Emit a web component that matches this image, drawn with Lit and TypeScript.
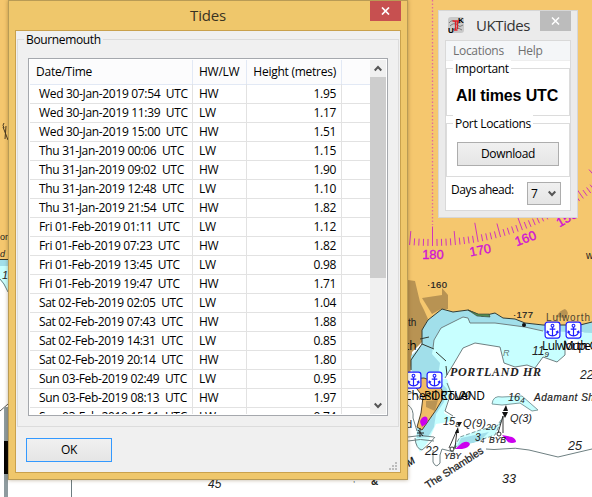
import { LitElement, html, svg, css } from "lit";
import { customElement } from "lit/decorators.js";

const TIDES: [string, string, string][] = [
  ["Wed 30-Jan-2019 07:54", "HW", "1.95"],
  ["Wed 30-Jan-2019 11:39", "LW", "1.17"],
  ["Wed 30-Jan-2019 15:00", "HW", "1.51"],
  ["Thu 31-Jan-2019 00:06", "LW", "1.15"],
  ["Thu 31-Jan-2019 09:02", "HW", "1.90"],
  ["Thu 31-Jan-2019 12:48", "LW", "1.10"],
  ["Thu 31-Jan-2019 21:54", "HW", "1.82"],
  ["Fri 01-Feb-2019 01:11", "LW", "1.12"],
  ["Fri 01-Feb-2019 07:23", "HW", "1.82"],
  ["Fri 01-Feb-2019 13:45", "LW", "0.98"],
  ["Fri 01-Feb-2019 19:47", "HW", "1.71"],
  ["Sat 02-Feb-2019 02:05", "LW", "1.04"],
  ["Sat 02-Feb-2019 07:43", "HW", "1.88"],
  ["Sat 02-Feb-2019 14:31", "LW", "0.85"],
  ["Sat 02-Feb-2019 20:14", "HW", "1.80"],
  ["Sun 03-Feb-2019 02:49", "LW", "0.95"],
  ["Sun 03-Feb-2019 08:13", "HW", "1.97"],
  ["Sun 03-Feb-2019 15:11", "LW", "0.74"],
];

@customElement("nautical-chart")
class NauticalChart extends LitElement {
  static styles = css`
    :host { display: block; width: 592px; height: 497px; }
    svg { display: block; }
    text { font-family: "Liberation Sans", sans-serif; fill: #222; }
    .rose { fill: #d012d4; stroke: #d012d4; stroke-width: 0.35; font-size: 13px; text-anchor: middle; }
    .deg { stroke: #cf35bb; stroke-width: 1; }
    .serif { font-family: "Liberation Serif", serif; font-style: italic; font-weight: bold; }
    .it { font-style: italic; }
    .open { font-family: "Open Sans", sans-serif; fill: #000; font-size: 12px; }
    .line { fill: none; stroke: #6f8082; stroke-width: 1; }
    .shoal { fill: #c8ffff; stroke: #7d9c9e; stroke-width: 1; }
    .coast { stroke: #303a32; stroke-width: 1; }
    .buoy { fill: none; stroke: #222; stroke-width: 0.9; }
    .flare { fill: #cc00ee; }
  `;

  private ticks() {
    const out = [];
    for (let d = -5; d <= 40; d++) {
      const a = (d * Math.PI) / 180;
      const len = d % 10 === 0 ? 19.5 : d % 5 === 0 ? 14 : 7;
      const p = (r: number) => [432.5 + r * Math.sin(a), -17 + r * Math.cos(a)];
      const [x1, y1] = p(263 - len);
      const [x2, y2] = p(263);
      out.push(svg`<line class="deg" x1=${x1} y1=${y1} x2=${x2} y2=${y2} />`);
    }
    return out;
  }

  private anchor(x: number, y: number) {
    return svg`<g transform="translate(${x} ${y})">
      <rect x="0.6" y="0.6" width="14.8" height="16" rx="2.5" fill="#fff" stroke="#1c1cff" stroke-width="1.2" />
      <circle cx="8" cy="4.2" r="1.4" fill="none" stroke="#1c1cff" stroke-width="1.1" />
      <path d="M8 5.6V14M5.2 7.6H10.8M2.8 9.8Q3.2 14 8 14.4Q12.8 14 13.2 9.8M2.3 11.6L2.8 9.6L4.6 10.8M13.7 11.6L13.2 9.6L11.4 10.8" fill="none" stroke="#1c1cff" stroke-width="1.2" />
    </g>`;
  }

  render() {
    return html`<svg width="592" height="497" viewBox="0 0 592 497">
      <rect width="592" height="497" fill="#fff" />
      <path fill="#f5c76e" d="M0 0H592V323L587 325H543L525 323L515 319L503 318L495 313L482 316L468 310L453 312L442 309L428 320L422 330V342H8V259H0Z" />
      <path fill="#a1dfea" d="M0 260H8V268H0Z" />
      <path fill="#c8ffff" d="M0 266H8V292L3 284L0 280Z" />
      <path class="line" d="M0 279L4 284L8 292" />
      <path class="coast" fill="none" d="M0 259.500H8" />

      <path fill="#b89353" d="M408 280L415 281L420 302L424 310L428 319L422 331V342L412 352L410 378H408Z" />
      <path fill="#b89353" d="M422 298L442 295V288L448 295V309L441 309L432 314Z" />
      <path fill="#b89353" d="M556 317Q560 310 565 309Q570 312 566 318Z" />

      <path fill="#a1dfea" d="M422 330L428 320L442 309L453 312L468 310L482 316L495 313L503 318L515 319L525 323L543 325H580L592 322V336L582 332L565 332L540 336L465 322L440 350L447 372L436 379H420L411 370V356L422 345Z" />
      <path fill="#c8ffff" d="M433 348L434 340L441 328L463 317L468 318L470 323L495 323L525 327L545 331L592 333V345L571 338L565 343V355L557 362L543 357L535 368L527 365L515 367L504 363L500 347L475 343L463 348L453 365L445 378L438 376L440 363L432 354Z" />
      <path class="line" d="M433 348L434 340L441 328L463 317L468 318L470 323L495 323L525 327L543 331M445 378L453 365L463 348L475 343L500 347L504 363L515 367L527 365L535 368L543 357L557 362L565 355V340" />
      <path class="coast" fill="none" d="M411 370V360L422 344V330L428 320L442 309L453 312L468 310L482 316L495 313L503 318L515 319L525 323L543 325H580L592 322M420 339L429 337M422 344L434 349M436 352L446 361M446 366L447 375" />
      <path fill="#548d52" stroke="#303a32" stroke-width="0.600" d="M468 310L478 314L489 314L490 317L477 316Z" />
      <circle cx="524" cy="325" r="2" fill="#111" />

      <path fill="#c8ffff" d="M437 378L447 379L451 390L444 413L453 418L448 422L436 424L428 442L420 452L415 442L417 430L427 411Z" />
      <path fill="#a1dfea" d="M438 379L447 389L444 402L436 414L434 427L428 437L417 438V428L431 410Z" />
      <path fill="#f0bc66" stroke="#4f422b" d="M408 379L424 378L437 383L442 390V400L436 410L422 430L417 427L421 413L423 397L414 385Z" />
      <path fill="#ba9454" d="M426 401L438 400L435 411L426 407Z" />
      <path class="line" d="M408 405Q414 409 413 418L417 431M447 383L451 393L445 411L453 416M415 438Q416 449 422 450Q430 444 435 437M433 450V462Q436 469 440 463Q439 454 442 449L454 452M408 437Q420 434 434 437M408 441Q420 438 434 441M486 449Q494 450 502 449Q515 447 529 450L558 457L592 449M408 394Q416 390 420 400" />
      <path class="shoal" d="M492 404Q493 395 502 397L522 396L538 410L532 411L520 403L502 405Z" />
      <path class="shoal" stroke-dasharray="4 2" d="M454 447L460 437L480 430L497 426L503 417L495 435L477 441Z" />
      <path fill="#a1dfea" d="M457 447L461 438L489 432L480 441Z" />
      <ellipse class="flare" cx="424" cy="421" rx="3.400" ry="4.800" transform="rotate(25 424 421)" />
      <path class="flare" d="M422 427L420 420L425 424Z" />
      <path class="flare" d="M455 449L462 443Q468 440 470 444Q469 448 462 449Z" />
      <path class="flare" d="M502 435L512 437Q516 439 516 442Q512 444 508 442Z" />
      <path class="buoy" d="M449 448L457 430L455 448M456 448H453M498 433L503 416V433" />
      <circle cx="452" cy="449" r="2" class="buoy" /><circle cx="499" cy="434" r="2" class="buoy" />
      <path fill="#111" d="M455 433L458 427L459 433ZM457 422H462L459 427ZM503 411L506 405L508 411ZM502 412H508L505 418Z" />
      <path d="M420 428V437M417 433H424M418 430L423 436" stroke="#222" />

      <path d="M432.500 0V225" stroke="#e36a9b" stroke-width="1.300" stroke-dasharray="1.500 2" />
      ${this.ticks()}
      <text class="rose" x="433" y="259">180</text>
      <text class="rose" transform="translate(481 254.500) rotate(-10)">170</text>
      <text class="rose" transform="translate(527 242.500) rotate(-20)">160</text>
      <text class="rose" transform="translate(569 222) rotate(-30)">150</text>

      <text x="427" y="288" font-size="9.500" textLength="20" stroke="#222" stroke-width="0.200">·160</text>
      <text x="513" y="318" font-size="9.500" textLength="20" stroke="#222" stroke-width="0.200">·177</text>
      <text x="546" y="321" font-size="10" textLength="44" opacity="0.8">Lulworth</text>
      <text x="586" y="259" font-size="10">w</text>
      <text x="408" y="326" font-size="10">th</text>
      <text x="503" y="356" font-size="9" class="it" fill-opacity="0.650">R</text>
      <text x="532" y="355" font-size="12" class="it">11<tspan font-size="8" dy="2">9</tspan></text>
      <text x="580" y="379" font-size="12" class="it">22</text>
      <text class="serif" x="450" y="376" font-size="12" textLength="91">PORTLAND HR</text>
      <text class="it" x="534" y="401" font-size="10" textLength="66" stroke="#222" stroke-width="0.200">Adamant Sha</text>
      <text class="it" x="508" y="401" font-size="11">16<tspan font-size="8" dy="2">4</tspan></text>
      <text class="it" x="459" y="399" font-size="11">20</text>
      <text class="it" x="443" y="425" font-size="11">15<tspan font-size="8" dy="2">8</tspan></text>
      <text class="it" x="463" y="427" font-size="11" textLength="23">Q(9)</text>
      <text class="it" x="486" y="430" font-size="9">20</text>
      <text class="it" x="510" y="422" font-size="11" textLength="22">Q(3)</text>
      <text class="it" x="475" y="441" font-size="10">3<tspan font-size="7" dy="2">4</tspan></text>
      <text class="it" x="489" y="443" font-size="8.500" textLength="17" stroke="#222" stroke-width="0.200">BYB</text>
      <text class="it" x="444" y="459" font-size="8.500" textLength="17" stroke="#222" stroke-width="0.200">YBY</text>
      <text class="it" x="425" y="455" font-size="12">22</text>
      <text class="it" x="568" y="450" font-size="12.500">25</text>
      <text class="it" x="502" y="483" font-size="12.500">33</text>
      <text class="it" x="208" y="488" font-size="12">45</text>
      <text x="371" y="485" font-size="10" font-weight="bold">&amp;</text>
      <text x="353" y="482" font-size="8">,</text>
      <text transform="translate(428 489) rotate(-33)" font-size="10.500" textLength="67" stroke="#222" stroke-width="0.250">The Shambles</text>
      <text class="it" transform="translate(409 467) rotate(-35)" font-size="10" font-weight="bold">M</text>
      <text x="406" y="428" font-size="11">d</text>

      ${this.anchor(544.5, 321.5)}${this.anchor(565.5, 321.5)}${this.anchor(405.5, 371.5)}${this.anchor(426.5, 371.5)}
      <text class="open" x="542" y="350" textLength="55">Lulworth C</text>
      <text class="open" x="563" y="350" textLength="36">Mupe B</text>
      <text class="open" x="405" y="350">th</text>
      <text class="open" x="404" y="400" textLength="64">Chesil Cove</text>
      <text class="open" x="424" y="400" textLength="61">PORTLAND</text>

      <text x="0" y="240" font-size="9">or</text>
      <text class="it" x="0" y="257" font-size="9">d</text>
      <text class="it" x="2" y="279" font-size="11">1</text>
      <path d="M4 123Q2 125 4 128M3 127L8 140M6 126L5 139" fill="none" stroke="#4a3a22" />
      <path d="M0 411L8 404" stroke="#555" />
      <rect x="4" y="407" width="4" height="90" fill="#8e9b9f" /><rect x="4" y="441" width="4" height="33" fill="#000" />
      <rect x="71" y="480" width="1" height="17" fill="#6d7c80" />
    </svg>`;
  }
}

@customElement("tides-dialog")
class TidesDialog extends LitElement {
  static styles = css`
    :host { box-sizing: border-box; display: flex; flex-direction: column; width: 400px; height: 480px;
      background: #efc76b; border: 1px solid #b99b55; padding: 0 6px 6px;
      font: 12px "Open Sans", sans-serif; color: #000; box-shadow: 0 0 4px rgba(90, 60, 10, 0.4); }
    .bar { position: relative; height: 29px; flex: none; text-align: center; font-size: 15px; line-height: 29px; letter-spacing: -0.2px; color: #3a3322; }
    .close { position: absolute; right: 0; top: 0; width: 31px; height: 20px; background: #c75050; display: grid; place-items: center; }
    .client { position: relative; box-sizing: border-box; flex: 1; background: #f0f0f0; border: 1px solid #c9a14d; padding: 8px 1px 0; }
    .group { box-sizing: border-box; height: 388px; border: 1px solid #dcdcdc; padding: 18px 10px 0; }
    .legend { position: absolute; left: 8px; top: 0; background: #f0f0f0; padding: 0 2px; line-height: 18px; letter-spacing: -0.35px; }
    .list { box-sizing: border-box; height: 358px; border: 1px solid #a5a8ad; background: #fff; padding: 1px; display: flex; }
    .table { flex: 1; overflow: hidden; }
    .row { display: grid; grid-template-columns: 163px 54px 95px 1fr; height: 19px; line-height: 19px; letter-spacing: -0.33px; }
    .cell { box-sizing: border-box; border-right: 1px solid #e2e2e2; border-bottom: 1px solid #e2e2e2; padding-left: 6px; white-space: pre; }
    .cell.date { padding-left: 9px; }
    .cell.num { text-align: right; padding: 0 5px 0 0; }
    .cell.end { border-right: 0; }
    .head { height: 24px; line-height: 24px; background: #fcfcfd; letter-spacing: -0.25px; }
    .head .cell { border-color: #e2e9f5; }
    .scroll { width: 16px; background: #f0f0f0; display: flex; flex-direction: column; }
    .arrow { height: 17px; display: grid; place-items: center; }
    .thumb { height: 201px; background: #cdcdcd; }
    .space { flex: 1; }
    .ok { box-sizing: border-box; margin: 11px 0 0 9px; width: 86px; height: 24px; border: 1px solid #3399ff; background: linear-gradient(#f0f0f0, #e5e5e5); text-align: center; line-height: 22px; letter-spacing: -0.4px; }
    .grip { position: absolute; right: 3px; bottom: 2px; }
    svg { display: block; }
  `;
  render() {
    return html`
      <div class="bar">Tides
        <div class="close"><svg width="9" height="8" viewBox="0 0 9 8"><path d="M1 .5L8 7.500M8 .5L1 7.500" stroke="#fff" stroke-width="1.700" /></svg></div>
      </div>
      <div class="client">
        <div class="group"><div class="list">
          <div class="table">
            <div class="row head"><div class="cell">Date/Time</div><div class="cell">HW/LW</div><div class="cell num">Height (metres)</div><div class="cell end"></div></div>
            ${TIDES.map(([d, t, h]) => html`<div class="row"><div class="cell date">${d}  UTC</div><div class="cell">${t}</div><div class="cell num">${h}</div><div class="cell end"></div></div>`)}
          </div>
          <div class="scroll">
            <div class="arrow"><svg width="8" height="7" viewBox="0 0 8 7"><path d="M.7 5.500L4 2L7.300 5.500" fill="none" stroke="#555" stroke-width="2" /></svg></div>
            <div class="thumb"></div><div class="space"></div>
            <div class="arrow"><svg width="8" height="7" viewBox="0 0 8 7"><path d="M.7 1.500L4 5L7.300 1.500" fill="none" stroke="#555" stroke-width="2" /></svg></div>
          </div>
        </div></div>
        <div class="legend">Bournemouth</div>
        <div class="ok">OK</div>
        <svg class="grip" width="8" height="8"><path d="M6 0h2v2h-2zM3 3h2v2h-2zM6 3h2v2h-2zM0 6h2v2h-2zM3 6h2v2h-2zM6 6h2v2h-2z" fill="#bdbdbd" /></svg>
      </div>`;
  }
}

@customElement("uk-tides-panel")
class UkTidesPanel extends LitElement {
  static styles = css`
    :host { box-sizing: border-box; display: flex; flex-direction: column; width: 140px; height: 208px; background: #ebebeb;
      border: 1px solid #d6d6d6; padding: 0 6px 6px; font: 12px "Open Sans", sans-serif; color: #000; }
    .bar { height: 29px; display: flex; align-items: flex-start; flex: none; }
    .logo { margin: 6px 0 0 3px; flex: none; }
    .title { margin: 0 0 0 12px; flex: 1; font-size: 15px; line-height: 29px; color: #333; letter-spacing: -0.4px; }
    .close { width: 31px; height: 20px; background: #bcbcbc; display: grid; place-items: center; flex: none; }
    .client { box-sizing: border-box; flex: 1; background: #fff; border: 1px solid #d9d9d9; }
    .menu { display: flex; gap: 14px; padding-left: 7px; height: 19px; line-height: 20px; background: #f4f6f8; color: #707070; border-bottom: 1px solid #eee; letter-spacing: -0.3px; }
    .group { position: relative; box-sizing: border-box; border: 1px solid #dcdcdc; }
    .legend { position: absolute; left: 6px; top: -9px; padding: 0 2px; background: #fff; line-height: 18px; letter-spacing: -0.3px; white-space: nowrap; }
    .important { height: 48px; margin-top: 7px; font: bold 16px "Liberation Sans", sans-serif; line-height: 53px; padding-left: 9px; white-space: nowrap; letter-spacing: -0.15px; }
    .important .legend { font: 12px/18px "Open Sans", sans-serif; }
    .ports { height: 54px; margin-top: 7px; padding: 18px 10px 0; }
    .btn { box-sizing: border-box; height: 24px; width: 102px; border: 1px solid #adadad; background: linear-gradient(#f0f0f0, #e5e5e5); text-align: center; line-height: 22px; letter-spacing: -0.35px; }
    .days { display: flex; justify-content: space-between; padding: 5px 9px 0 5px; line-height: 16px; letter-spacing: -0.5px; }
    .select { box-sizing: border-box; width: 34px; height: 23px; border: 1px solid #adadad; background: linear-gradient(#f0f0f0, #e5e5e5); display: flex; align-items: center; justify-content: space-between; padding: 0 4px 0 3px; }
    svg { display: block; }
  `;
  render() {
    return html`
      <div class="bar">
        <svg class="logo" width="16" height="16" viewBox="0 0 16 16">
          <rect width="16" height="16" rx="3" fill="#c9c9c9" />
          <path d="M1 6Q4 2 7 5T14 4M2 9Q6 5 9 8T15 8M5 13Q8 9 14 13" fill="none" stroke="#666" stroke-width=".8" />
          <text x="0" y="15.500" font-family="Liberation Sans" font-size="8" font-weight="bold">U</text>
          <text x="10" y="6" font-family="Liberation Sans" font-size="8" font-weight="bold">K</text>
          <path d="M4.500 4H11M7.500 4V13M6 13H9.500M9.500 4V12" stroke="#dd2028" stroke-width="1.300" fill="none" />
        </svg>
        <div class="title">UKTides</div>
        <div class="close"><svg width="9" height="8" viewBox="0 0 9 8"><path d="M1 .5L8 7.500M8 .5L1 7.500" stroke="#fff" stroke-width="1.500" /></svg></div>
      </div>
      <div class="client">
        <div class="menu"><span>Locations</span><span>Help</span></div>
        <div class="group important"><div class="legend">Important</div>All times UTC</div>
        <div class="group ports"><div class="legend">Port Locations</div><div class="btn">Download</div></div>
        <div class="days"><span>Days ahead:</span>
          <div class="select"><span>7</span><svg width="8" height="7" viewBox="0 0 8 7"><path d="M.7 1.500L4 5L7.300 1.500" fill="none" stroke="#555" stroke-width="2" /></svg></div>
        </div>
      </div>`;
  }
}

@customElement("app-root")
class AppRoot extends LitElement {
  static styles = css`
    :host { display: block; position: relative; width: 592px; height: 497px; overflow: hidden; }
    .tides { position: absolute; left: 8px; top: 0; }
    .panel { position: absolute; left: 438px; top: 10px; }
  `;
  render() {
    return html`<nautical-chart></nautical-chart>
      <tides-dialog class="tides"></tides-dialog>
      <uk-tides-panel class="panel"></uk-tides-panel>`;
  }
}
